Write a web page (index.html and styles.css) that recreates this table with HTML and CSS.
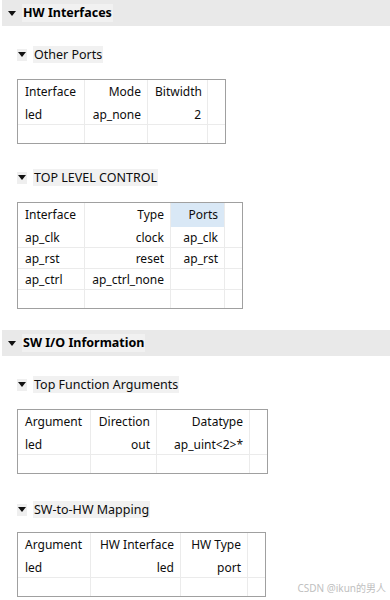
FILE: index.html
```html
<!DOCTYPE html>
<html>
<head>
<meta charset="utf-8">
<link rel="stylesheet" href="styles.css">
</head>
<body>
<div class="page">
  <div class="section">
    <div class="band"><span class="tri"></span><span class="band-title">HW Interfaces</span></div>
    <div class="sub sub-first">
      <div class="sub-head"><span class="sub-tri"><span class="tri"></span></span><span class="sub-title">Other Ports</span></div>
      <div class="tbl t1">
        <div class="c h l">Interface</div><div class="c h r">Mode</div><div class="c h r">Bitwidth</div><div class="c h e"></div>
        <div class="c l">led</div><div class="c r">ap_none</div><div class="c r">2</div><div class="c e"></div>
        <div class="c z"></div><div class="c z"></div><div class="c z"></div><div class="c z e"></div>
      </div>
    </div>
    <div class="sub">
      <div class="sub-head"><span class="sub-tri"><span class="tri"></span></span><span class="sub-title">TOP LEVEL CONTROL</span></div>
      <div class="tbl t2">
        <div class="c h l">Interface</div><div class="c h r">Type</div><div class="c h r sel">Ports</div><div class="c h e"></div>
        <div class="c l">ap_clk</div><div class="c r">clock</div><div class="c r">ap_clk</div><div class="c e"></div>
        <div class="c l">ap_rst</div><div class="c r">reset</div><div class="c r">ap_rst</div><div class="c e"></div>
        <div class="c l">ap_ctrl</div><div class="c r">ap_ctrl_none</div><div class="c r"></div><div class="c e"></div>
        <div class="c z"></div><div class="c z"></div><div class="c z"></div><div class="c z e"></div>
      </div>
    </div>
  </div>
  <div class="section section-second">
    <div class="band"><span class="tri"></span><span class="band-title">SW I/O Information</span></div>
    <div class="sub sub-first">
      <div class="sub-head"><span class="sub-tri"><span class="tri"></span></span><span class="sub-title">Top Function Arguments</span></div>
      <div class="tbl t3">
        <div class="c h l">Argument</div><div class="c h r">Direction</div><div class="c h r">Datatype</div><div class="c h e"></div>
        <div class="c l">led</div><div class="c r">out</div><div class="c r">ap_uint&lt;2&gt;*</div><div class="c e"></div>
        <div class="c z"></div><div class="c z"></div><div class="c z"></div><div class="c z e"></div>
      </div>
    </div>
    <div class="sub sub-last">
      <div class="sub-head"><span class="sub-tri"><span class="tri"></span></span><span class="sub-title">SW-to-HW Mapping</span></div>
      <div class="tbl t4">
        <div class="c h l">Argument</div><div class="c h r">HW Interface</div><div class="c h r">HW Type</div><div class="c h e"></div>
        <div class="c l">led</div><div class="c r">led</div><div class="c r">port</div><div class="c e"></div>
        <div class="c z"></div><div class="c z"></div><div class="c z"></div><div class="c z e"></div>
      </div>
    </div>
  </div>
  <div class="watermark">CSDN @ikun的男人</div>
</div>
</body>
</html>
```
FILE: styles.css
```css
* { box-sizing: border-box; }
html, body { margin: 0; padding: 0; background: #fff; }
body {
  font-family: "Noto Sans", "Noto Sans CJK SC", sans-serif;
  font-size: 12px;
  color: #0d0d0d;
  width: 390px;
  height: 600px;
  overflow: hidden;
}
.page { position: relative; height: 600px; }
.band {
  margin-left: 2px;
  height: 26px;
  background: #e9e9e9;
  display: flex;
  align-items: center;
  padding-left: 6px;
}
.band .tri { margin-right: 6px; }
.band-title {
  background: #f1f1f1;
  font-weight: bold;
  font-size: 12.5px;
  line-height: 18px;
  padding: 0 1px;
  color: #000;
}
.tri {
  display: inline-block;
  width: 0; height: 0;
  border-left: 4px solid transparent;
  border-right: 4px solid transparent;
  border-top: 5px solid #111;
}
.section-second { margin-top: 21px; }
.sub { padding-left: 17px; margin-top: 25px; }
.sub-first { margin-top: 20px; }
.sub-last { margin-top: 27px; }
.sub-head { display: flex; align-items: center; height: 17px; }
.sub-tri {
  width: 10px; height: 12px;
  background: #efefef;
  display: flex; align-items: center; justify-content: center;
  margin-right: 6px;
}
.sub-title {
  background: #f1f1f1;
  font-size: 12.5px;
  line-height: 17px;
  padding: 0 1px;
}
.tbl {
  margin-top: 16px;
  border: 1px solid #a0a0a0;
  display: grid;
}
.sub-last .tbl { margin-top: 14px; }
.tbl > .h { padding-top: 2px; }
.t1 { width: 209px; grid-template-columns: 67px 63px 60px 1fr; grid-template-rows: 24px 21px 18px; }
.t2 { width: 226px; grid-template-columns: 67px 86px 54px 1fr; grid-template-rows: 24px 21px 21px 21px 18px; }
.t3 { width: 251px; grid-template-columns: 73px 66px 93px 1fr; grid-template-rows: 24px 21px 18px; }
.t4 { width: 249px; grid-template-columns: 73px 90px 67px 1fr; grid-template-rows: 24px 21px 18px; }
.c {
  line-height: 21px;
  white-space: nowrap;
  overflow: hidden;
  border-right: 1px solid #ebebeb;
  border-bottom: 1px solid #ebebeb;
  padding: 0 6px 0 7px;
}
.c.h { border-bottom: none; line-height: 20px; }
.c.e { border-right: none; }
.c.z { border-bottom: none; }
.l { text-align: left; }
.r { text-align: right; }
.sel { background: #d9e8f6; }
.watermark {
  position: absolute;
  right: 4px;
  bottom: 5px;
  font-family: "Noto Sans", "Noto Sans CJK SC", sans-serif;
  font-size: 10px;
  color: #c0c0c0;
}
```
